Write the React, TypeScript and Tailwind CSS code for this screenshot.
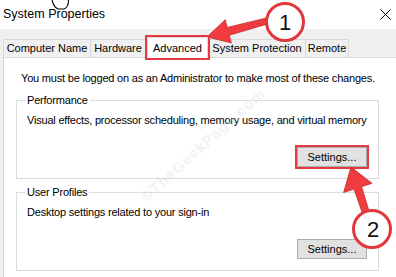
import React from "react";

const tabs = [
	{ label: "Computer Name", width: "w-[88px]" },
	{ label: "Hardware", width: "w-[56px]" },
	{ label: "Advanced", width: "w-[61px]", active: true },
	{ label: "System Protection", width: "w-[98px]" },
	{ label: "Remote", width: "w-[44px]" },
];

const GroupBox = ({
	title,
	text,
	highlight,
	className,
}: {
	title: string;
	text: string;
	highlight?: boolean;
	className?: string;
}) => (
	<fieldset
		className={`ml-[12px] w-[363px] min-w-0 border border-[#dcdcdc] pl-[8px] pr-[11px] pb-[11px] ${className ?? ""}`}
	>
		<legend className="px-[2px] leading-[15px]">{title}</legend>
		<p className="mt-[5px] whitespace-nowrap pl-[2px] leading-[15px]">{text}</p>
		<div className="mt-[19px] flex justify-end">
			<button
				className={`h-[20px] w-[70px] border border-[#adadad] bg-[#e1e1e1] leading-[18px] tracking-normal ${highlight ? "shadow-[0_0_0_2px_#e23a3e]" : ""}`}
			>
				Settings...
			</button>
		</div>
	</fieldset>
);

const Overlay = () => (
	<svg
		className="pointer-events-none absolute inset-0"
		width={396}
		height={277}
		viewBox="0 0 396 277"
	>
		{/* mouse pointer */}
		<path
			d="M52 0 C53 4 55 8 58.5 9 L64 9 C67 8 68.5 5 68.5 0"
			fill="#fff"
			stroke="#000"
			strokeWidth={1.1}
		/>
		{/* arrow 1 */}
		<polygon
			points="207,37 225.2,19.7 227.3,27.4 266.2,18.1 267.8,23.9 229.3,35.2 231.4,42.9"
			fill="#ef3d3f"
			stroke="#c9282c"
			strokeWidth={0.8}
			strokeLinejoin="round"
		/>
		{/* arrow 2 */}
		<polygon
			points="351,167 372,183.3 361.6,186.7 369.3,211.9 362.7,214.1 354,189.1 343.6,192.5"
			fill="#ef3d3f"
			stroke="#c9282c"
			strokeWidth={0.8}
			strokeLinejoin="round"
		/>
		<circle cx={285} cy={22} r={18.5} fill="#fff" stroke="#e2383c" strokeWidth={3} />
		<text
			x={285}
			y={30}
			textAnchor="middle"
			fontSize={22}
			fontFamily="'Liberation Sans', Arial, sans-serif"
			fill="#111"
		>
			1
		</text>
		<circle cx={372} cy={229} r={18.5} fill="#fff" stroke="#e2383c" strokeWidth={3} />
		<text
			x={373}
			y={237}
			textAnchor="middle"
			fontSize={22}
			fontFamily="'Liberation Sans', Arial, sans-serif"
			fill="#111"
		>
			2
		</text>
	</svg>
);

export default function App() {
	return (
		<div className="relative h-[277px] w-[396px] overflow-hidden bg-[#f0f0f0] font-['Liberation_Sans',Arial,sans-serif] text-[11px] tracking-[-0.2px] text-black">
			<div className="flex h-[29px] items-center justify-between bg-white pl-[3px] pr-[5px]">
				<span className="text-[12.5px] tracking-normal">System Properties</span>
				<svg width={11} height={11} viewBox="0 0 11 11">
					<path d="M0.5 0.5 L10.5 10.5 M10.5 0.5 L0.5 10.5" stroke="#000" strokeWidth={1} />
				</svg>
			</div>
			<div className="flex h-[28px] items-end whitespace-nowrap pl-[3px] tracking-normal">
				{tabs.map((tab) =>
					tab.active ? (
						<div
							key={tab.label}
							className={`relative z-10 -mb-px ml-[2px] flex h-[21px] items-center justify-center border border-b-0 border-[#d9d9d9] bg-white ${tab.width} shadow-[0_0_0_2px_#e23a3e]`}
						>
							{tab.label}
						</div>
					) : (
						<div
							key={tab.label}
							className={`-mr-px flex h-[18px] items-center justify-center border border-b-0 border-[#d9d9d9] bg-[#f0f0f0] ${tab.width}`}
						>
							{tab.label}
						</div>
					),
				)}
			</div>
			<div className="ml-[3px] h-[230px] border-l border-t border-[#d9d9d9] bg-white pt-[13px]">
				<p className="whitespace-nowrap pl-[17px] leading-[15px]">
					You must be logged on as an Administrator to make most of these changes.
				</p>
				<GroupBox
					className="mt-[7px]"
					title="Performance"
					text="Visual effects, processor scheduling, memory usage, and virtual memory"
					highlight
				/>
				<GroupBox
					className="mt-[6px]"
					title="User Profiles"
					text="Desktop settings related to your sign-in"
				/>
			</div>
			<div className="pointer-events-none absolute left-[118px] top-[134px] w-[170px] -rotate-[42deg] text-center text-[15px] font-bold tracking-[1px] text-[#c9d8e8] opacity-30">
				©TheGeekPage.com
			</div>
			<Overlay />
		</div>
	);
}
